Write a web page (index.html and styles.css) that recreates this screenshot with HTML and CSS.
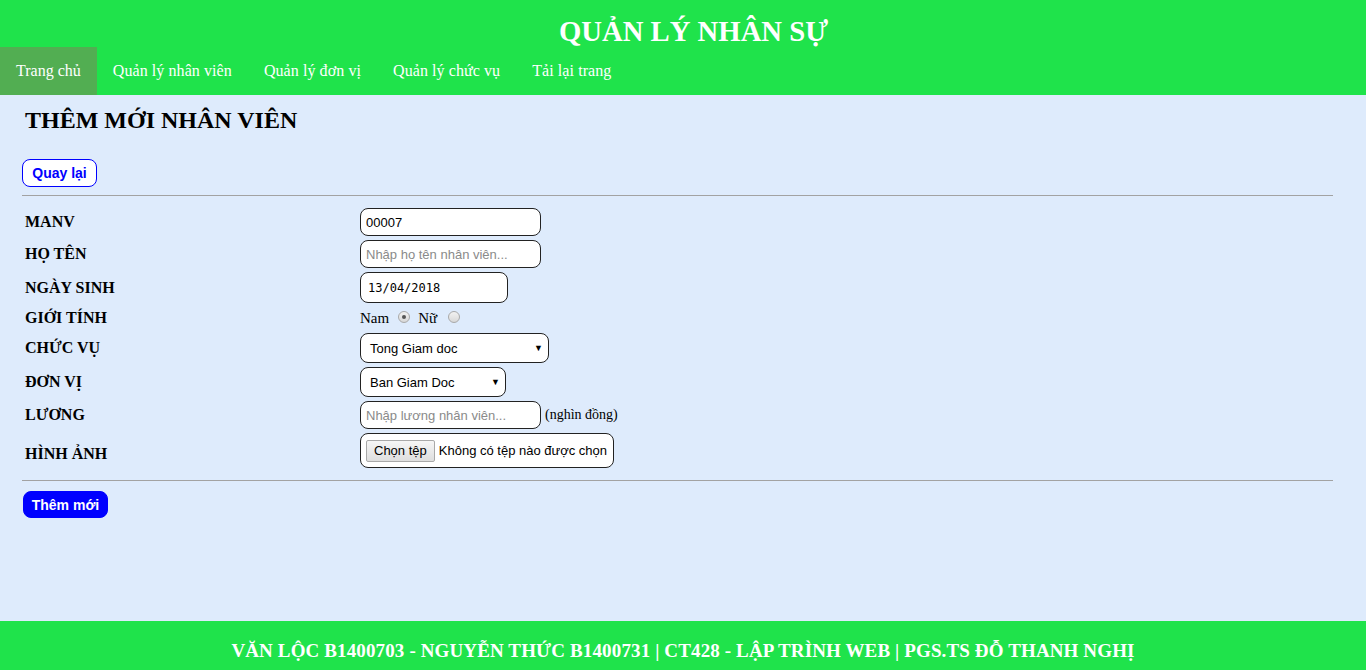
FILE: index.html
```html
<!DOCTYPE html>
<html lang="vi">
<head>
<meta charset="utf-8">
<title>Quản lý nhân sự</title>
<link rel="stylesheet" href="styles.css">
</head>
<body>
<header class="header">
  <h1 class="site-title">QUẢN LÝ NHÂN SỰ</h1>
  <nav class="nav">
    <a class="nav-item active" href="#">Trang chủ</a>
    <a class="nav-item" href="#">Quản lý nhân viên</a>
    <a class="nav-item" href="#">Quản lý đơn vị</a>
    <a class="nav-item" href="#">Quản lý chức vụ</a>
    <a class="nav-item" href="#">Tải lại trang</a>
  </nav>
</header>
<main class="main">
  <h2 class="page-title">THÊM MỚI NHÂN VIÊN</h2>
  <button class="btn-back" type="button">Quay lại</button>
  <hr class="divider">
  <form class="form">
    <label class="lbl">MANV</label>
    <div class="cell"><input class="field w181" type="text" value="00007"></div>

    <label class="lbl">HỌ TÊN</label>
    <div class="cell"><input class="field w181" type="text" placeholder="Nhập họ tên nhân viên..."></div>

    <label class="lbl">NGÀY SINH</label>
    <div class="cell"><input class="field date" type="text" value="13/04/2018"></div>

    <label class="lbl">GIỚI TÍNH</label>
    <div class="cell gender">
      <span>Nam</span><span class="radio checked"></span>
      <span>Nữ</span><span class="radio"></span>
    </div>

    <label class="lbl">CHỨC VỤ</label>
    <div class="cell"><div class="select w189"><span>Tong Giam doc</span><span class="arrow">▼</span></div></div>

    <label class="lbl">ĐƠN VỊ</label>
    <div class="cell"><div class="select w146"><span>Ban Giam Doc</span><span class="arrow">▼</span></div></div>

    <label class="lbl">LƯƠNG</label>
    <div class="cell"><input class="field w181" type="text" placeholder="Nhập lương nhân viên..."><span class="unit">(nghìn đồng)</span></div>

    <label class="lbl">HÌNH ẢNH</label>
    <div class="cell file-cell"><div class="file"><span class="file-btn">Chọn tệp</span><span class="file-text">Không có tệp nào được chọn</span></div></div>
  </form>
  <hr class="divider divider-bottom">
  <button class="btn-add" type="button">Thêm mới</button>
</main>
<footer class="footer">VĂN LỘC B1400703 - NGUYỄN THỨC B1400731 | CT428 - LẬP TRÌNH WEB | PGS.TS ĐỖ THANH NGHỊ</footer>
</body>
</html>
```
FILE: styles.css
```css
* { box-sizing: border-box; }
html, body { height: 100%; }
body {
  margin: 0;
  display: flex;
  flex-direction: column;
  font-family: "Liberation Serif", "Times New Roman", serif;
  background: #deebfc;
  color: #000;
}
.header {
  background: #1fe34b;
  color: #fff;
}
.site-title {
  margin: 0;
  height: 47px;
  padding-top: 13px;
  padding-left: 21px;
  text-align: center;
  font-size: 28.7px;
  line-height: 36px;
  font-weight: bold;
}
.nav {
  display: flex;
  height: 48px;
}
.nav-item {
  display: block;
  padding: 14px 16px;
  line-height: 20px;
  font-size: 16px;
  letter-spacing: 0.08px;
  color: #fff;
  text-decoration: none;
}
.nav-item.active { background: #52ae52; letter-spacing: 0; }
.main {
  flex: 1;
  padding: 0 33px 0 22px;
}
.page-title {
  margin: 10px 0 0 3px;
  font-size: 24px;
  line-height: 30px;
  font-weight: bold;
}
.btn-back {
  display: block;
  margin-top: 24px;
  width: 75px;
  height: 28px;
  padding: 0;
  background: #fff;
  border: 1px solid #0000ff;
  border-radius: 8px;
  color: #0000ff;
  font-family: "Liberation Sans", Arial, sans-serif;
  font-weight: bold;
  font-size: 14px;
}
.divider {
  margin: 8px 0 0 0;
  border: 0;
  border-top: 1px solid #a2a2a2;
  height: 0;
}
.form {
  display: grid;
  grid-template-columns: 338px auto;
  row-gap: 4px;
  margin-top: 12px;
  align-items: center;
}
.lbl {
  padding-left: 3px;
  font-size: 16px;
  font-weight: bold;
  line-height: 20px;
}
.cell {
  display: flex;
  align-items: center;
}
.field {
  height: 28px;
  border: 1px solid #222;
  border-radius: 8px;
  background: #fff;
  padding: 0 5px;
  font-family: "Liberation Sans", Arial, sans-serif;
  font-size: 13px;
  color: #000;
  outline: none;
}
.field::placeholder { color: #8a8a8a; }
.w181 { width: 181px; }
.date {
  width: 148px;
  height: 31px;
  padding-left: 7px;
  font-family: "DejaVu Sans Mono", "Liberation Mono", monospace;
  font-size: 12px;
}
.gender {
  height: 22px;
  font-size: 15px;
}
.radio {
  display: inline-block;
  width: 12px;
  height: 12px;
  margin: 0 8px 0 9px;
  border: 1px solid #a9a9a9;
  border-radius: 50%;
  background: linear-gradient(#f2f2f2, #d8d8d8);
  position: relative;
  top: -1px;
}
.radio:last-child { margin-left: 11px; }
.radio.checked::after {
  content: "";
  position: absolute;
  left: 3px;
  top: 3px;
  width: 4px;
  height: 4px;
  border-radius: 50%;
  background: #555;
}
.select {
  display: flex;
  align-items: center;
  justify-content: space-between;
  height: 30px;
  border: 1px solid #222;
  border-radius: 8px;
  background: #fff;
  padding: 0 5px 0 9px;
  font-family: "Liberation Sans", Arial, sans-serif;
  font-size: 13px;
}
.w189 { width: 189px; }
.w146 { width: 146px; }
.arrow { font-size: 9px; }
.unit {
  margin-left: 4px;
  font-size: 14px;
}
.file-cell {
  height: 42px;
  align-items: flex-start;
}
.file {
  display: flex;
  align-items: center;
  width: 254px;
  height: 35px;
  border: 1px solid #222;
  border-radius: 8px;
  background: #fff;
  padding: 0 5px;
  font-family: "Liberation Sans", Arial, sans-serif;
  font-size: 13px;
  white-space: nowrap;
}
.file-btn {
  display: inline-block;
  height: 22px;
  line-height: 20px;
  padding: 0 7px;
  border: 1px solid #a9a9a9;
  border-radius: 2px;
  background: linear-gradient(#f6f6f6, #dedede);
  margin-right: 4px;
}
.divider-bottom { margin-top: 5px; }
.btn-add {
  display: block;
  margin: 10px 0 0 1px;
  width: 85px;
  height: 27px;
  padding: 0;
  background: #0000ff;
  border: 1px solid #0000ff;
  border-radius: 8px;
  color: #fff;
  font-family: "Liberation Sans", Arial, sans-serif;
  font-weight: bold;
  font-size: 14px;
}
.footer {
  height: 49px;
  background: #1fe34b;
  color: #fff;
  text-align: center;
  font-weight: bold;
  font-size: 19px;
  letter-spacing: 0.13px;
  line-height: 22px;
  padding-top: 19px;
}
```
